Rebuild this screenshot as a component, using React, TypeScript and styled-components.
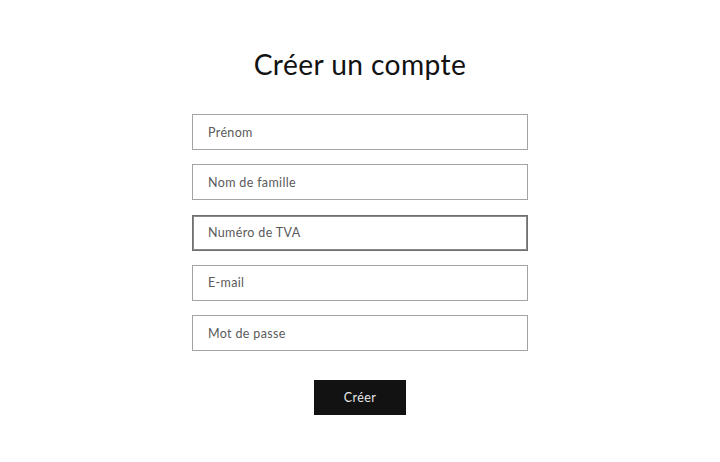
import React from "react";
import styled, { createGlobalStyle } from "styled-components";

const GlobalStyle = createGlobalStyle`
  html, body {
    margin: 0;
    padding: 0;
    background: #fff;
  }
  body {
    font-family: Lato, "Open Sans", sans-serif;
    color: #121212;
  }
`;

const Page = styled.main`
  display: flex;
  flex-direction: column;
  align-items: center;
  padding-top: 44px;
`;

const Title = styled.h1`
  margin: 0 0 30px;
  font-size: 28.2px;
  font-weight: 400;
  line-height: 40px;
  letter-spacing: 0.4px;
  color: #121212;
`;

const Form = styled.form`
  display: flex;
  flex-direction: column;
  align-items: center;
  gap: 14.25px;
  width: 336px;
`;

const Field = styled.div<{ $focused?: boolean }>`
  box-sizing: border-box;
  width: 100%;
  height: 36px;
  display: flex;
  align-items: center;
  padding: 0 15px;
  border: 1px solid ${(p) => (p.$focused ? "#6f6f6f" : "#a3a3a3")};
  box-shadow: ${(p) => (p.$focused ? "inset 0 0 0 1px #8a8a8a" : "none")};
  background: #fff;
`;

const Input = styled.input`
  flex: 1;
  border: 0;
  outline: none;
  padding: 0;
  background: transparent;
  font-family: inherit;
  font-size: 12.5px;
  letter-spacing: 0.35px;
  color: #121212;

  &::placeholder {
    color: #5a5a5a;
    opacity: 1;
  }
`;

const Submit = styled.button`
  margin-top: 15px;
  width: 92px;
  height: 35px;
  border: 0;
  background: #121212;
  color: #e8e8e8;
  font-family: inherit;
  font-size: 12.5px;
  letter-spacing: 0.4px;
  cursor: pointer;
`;

const fields = [
  { name: "first_name", label: "Prénom" },
  { name: "last_name", label: "Nom de famille" },
  { name: "vat", label: "Numéro de TVA", focused: true },
  { name: "email", label: "E-mail" },
  { name: "password", label: "Mot de passe", type: "password" },
];

export default function App() {
  return (
    <>
      <GlobalStyle />
      <Page>
        <Title>Créer un compte</Title>
        <Form onSubmit={(e) => e.preventDefault()}>
          {fields.map((f) => (
            <Field key={f.name} $focused={f.focused}>
              <Input name={f.name} type={f.type || "text"} placeholder={f.label} />
            </Field>
          ))}
          <Submit type="submit">Créer</Submit>
        </Form>
      </Page>
    </>
  );
}
